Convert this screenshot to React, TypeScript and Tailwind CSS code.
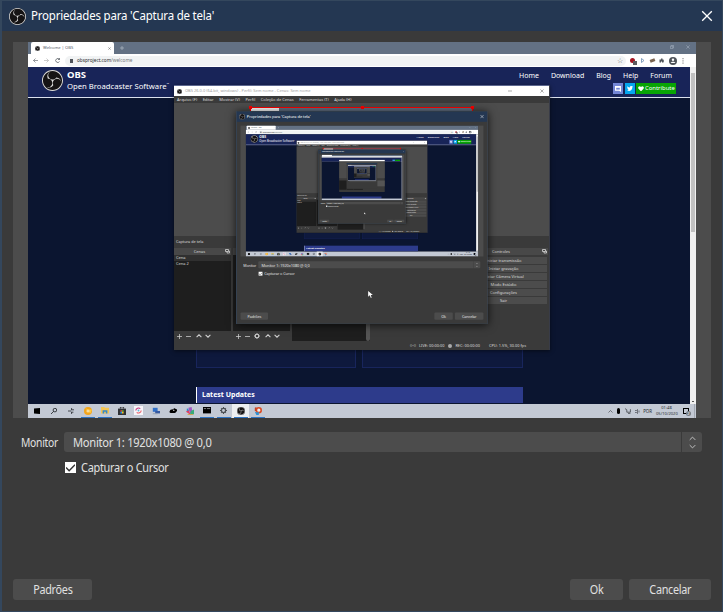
import React from 'react';
import { SiObsstudio } from 'react-icons/si';

const SCALE = 0.348;
const TEXT_DEPTH = 2;

function Logo({ className = '' }: { className?: string }) {
  return (
    <span className={`block shrink-0 rounded-full bg-[#151314] text-[#dcdcdc] ${className}`}>
      <SiObsstudio className="block size-full" />
    </span>
  );
}

type StrokeProps = { d: string; className?: string; w?: number };
function Stroke({ d, className = '', w = 1.5 }: StrokeProps) {
  return (
    <svg viewBox="0 0 10 10" className={`block shrink-0 ${className}`} fill="none" stroke="currentColor" strokeWidth={w}>
      <path d={d} />
    </svg>
  );
}

const X = 'M1 1L9 9M9 1L1 9';
const PLUS = 'M5 0V10M0 5H10';
const MINUS = 'M0 5H10';
const UP = 'M1 7L5 3L9 7';
const DOWN = 'M1 3L5 7L9 3';

function Browser() {
  return (
    <div className="flex h-[362px] flex-col bg-[#0b1530]">
      <div className="flex h-3 items-end bg-[#637184] pl-[3px]">
        <div className="flex h-[12px] w-[83px] items-center rounded-t-[2px] bg-white pl-1">
          <Logo className="size-[5px]" />
          <span className="ml-[3px] w-[66px] whitespace-nowrap text-[4.100px] text-[#555c68]">Welcome | OBS</span>
          <Stroke d={X} className="mr-[3px] size-[3px] text-[#555]" />
        </div>
        <Stroke d={PLUS} className="mb-[4px] ml-[6px] size-[4px] text-[#b8c2ce]" />
        <div className="mb-[5px] ml-auto mr-[6px] flex items-center gap-[12px] text-[#a3afbd]">
          <Stroke d="M1 3H7V9H1ZM3 3V1H9V7H7" className="size-[4px]" />
          <Stroke d={X} className="size-[4px]" />
        </div>
      </div>
      <div className="flex h-[13px] items-center bg-white px-[5px] text-[#555b62]">
        <Stroke d="M10 5H1M5 1L1 5L5 9" className="size-[5px]" w={1.200} />
        <Stroke d="M0 5H9M5 1L9 5L5 9" className="ml-[6px] size-[5px] text-[#aaa]" w={1.200} />
        <Stroke d="M9 3A4 4 0 1 0 9 7M9 0V3H6" className="ml-[6px] size-[5px]" />
        <div className="ml-[5px] flex h-[10px] w-[561px] items-center rounded-full bg-[#f1f3f4] pl-[5px] pr-[3px]">
          <span className="h-[4px] w-[3px] bg-[#50545a]" />
          <span className="ml-[4px] whitespace-nowrap text-[4.700px] text-[#73777c]"><span className="text-[#26292d]">obsproject.com</span>/welcome</span>
          <span className="ml-auto text-[7px] leading-none">☆</span>
        </div>
        <div className="ml-[4px] flex w-[54px] shrink-0 items-center justify-between">
          <span className="relative size-[5px] rounded-full bg-[#a31522]"><i className="absolute left-[3px] top-[3px] size-[4px] bg-[#5c5c60]" /></span>
          <Stroke d="M3 1V9L8 5Z" className="size-[5px] text-[#5d83aa]" />
          <span className="h-[3px] w-[5px] rotate-[-20deg] bg-[#796450]" />
          <svg viewBox="0 0 10 10" className="size-[5px] fill-[#50555b]"><path d="M1 3H4V1H7V3H9V5H10V7H9V9H6V7H4V9H1Z" /></svg>
          <svg viewBox="0 0 10 10" className="size-[8px]"><circle cx="5" cy="5" r="5" fill="#4e5359" /><circle cx="5" cy="3.500" r="1.500" fill="#fff" /><path d="M2 7.500C3 5.500 7 5.500 8 7.500Z" fill="#fff" /></svg>
          <svg viewBox="0 0 2 8" className="h-[6px] w-[2px] fill-[#555]"><path d="M.5 0h1v1.500h-1zM.5 3h1v1.500h-1zM.5 6h1v1.500h-1z" /></svg>
        </div>
      </div>
      <div className="flex min-h-0 flex-1">
        <div className="flex min-w-0 flex-1 flex-col">
          <div className="flex h-[31px] shrink-0 border-b border-[#dce1ee] bg-[#182458] pl-[14px] pt-[3px] text-white">
            <Logo className="size-[21px]" />
            <div className="ml-[4px] whitespace-nowrap">
              <div className="h-[11px] text-[9.500px] font-bold leading-[10px]">OBS</div>
              <div className="flex text-[7.700px] leading-[10px]">Open Broadcaster Software<span className="text-[3px] leading-[6px]">™</span></div>
            </div>
            <div className="ml-auto mr-[14px]">
              <div className="flex justify-end gap-[12px] pr-[4px] text-[7px] leading-[11px]">
                <span>Home</span><span>Download</span><span>Blog</span><span>Help</span><span>Forum</span>
              </div>
              <div className="mt-[2px] flex h-[11px] justify-end gap-[1.500px]">
                <span className="flex w-[10px] items-center justify-center bg-[#7386d5]"><svg viewBox="0 0 10 10" className="size-[6px]"><path d="M0 0H10V10L7 8H0Z" fill="#fff" /><path d="M2 3H8V6H2Z" fill="#7386d5" /></svg></span>
                <span className="flex w-[10px] items-center justify-center bg-[#05a6ee]"><svg viewBox="0 0 24 20" className="w-[6px] fill-white"><path d="M24 2.400 21.500 5C21.500 14 15 20 7.500 20 5 20 2 19 0 17.700c2.500.2 5-.5 7-2-2-.1-4-1.500-4.600-3.500h2.200C2 11.500.8 9.500.8 7.300l2.200.6C.7 6 .2 3.500 1.600 1c2.500 3 6 5 10.200 5.200C11 2 14 0 16.600 0c1.500 0 2.700.6 3.600 1.500L23 .5z" /></svg></span>
                <span className="flex w-[40px] items-center bg-[#08a404] pl-[2px] text-[5.900px]"><svg viewBox="0 0 10 9" className="mr-[1px] w-[6px] shrink-0 fill-white"><path d="M5 9L.8 4.700C-1 2 2-1.500 5 1.500 8-1.500 11 2 9.200 4.700Z" /></svg>Contribute</span>
              </div>
            </div>
          </div>
          <div className="ml-[168px] mt-auto flex w-[327px] flex-col">
            <div className="flex gap-[6px]">
              <div className="h-[80px] w-[160px] border border-[#18255c] bg-[#0e193d]" />
              <div className="h-[80px] w-[161px] border border-[#18255c] bg-[#0e193d]" />
            </div>
            <div className="mb-[1px] mt-[19px] flex h-[16px] items-center border-l border-white bg-[#2d3b8b] pl-[5px] text-[7px] font-bold text-white">Latest Updates</div>
          </div>
        </div>
        <div className="flex w-[6px] flex-col items-center bg-[#f1f1f1]">
          <span className="mt-[6px] h-[159px] w-[4px] bg-[#c1c1c1]" />
          <span className="mb-[2px] mt-auto h-px w-[2px] bg-[#555]" />
        </div>
      </div>
    </div>
  );
}

function Task({ children, on = false, active = false }: { children: React.ReactNode; on?: boolean; active?: boolean }) {
  return (
    <div className={`flex h-[14px] w-[17px] flex-col items-center text-[#15181c] ${active ? 'bg-[#eceef1]' : ''}`}>
      <div className="flex flex-1 items-center">{children}</div>
      <div className={`h-px w-[14px] ${on ? 'bg-[#2f75c4]' : ''}`} />
    </div>
  );
}

function Taskbar() {
  return (
    <div className="flex h-[14px] items-center bg-[#c3c9d4]">
      <Task><svg viewBox="0 0 10 10" className="size-[6px]"><path d="M0 1L10 0V10L0 9Z" /></svg></Task>
      <Task><svg viewBox="0 0 10 10" className="size-[6px]" fill="none" stroke="currentColor" strokeWidth="1.300"><circle cx="6.500" cy="3.500" r="3" /><path d="M4.500 5.500L0 10" /></svg></Task>
      <Task><Stroke d="M0 5H5M5 3H10M5 7H9M6 0V3M6 7V10" className="size-[6px]" w={1.200} /></Task>
      <Task on><svg viewBox="0 0 10 10" className="size-[8px]"><circle cx="5" cy="5" r="5" fill="#f3a51c" /><path d="M1 1L5 3H10L8 8" fill="#ffc93f" /><circle cx="5" cy="5" r="2" fill="#f5dca0" /></svg></Task>
      <Task on><svg viewBox="0 0 10 8" className="w-[8px]"><path d="M0 0H4L5 1H10V8H0Z" fill="#f4c453" /><path d="M2 8V4H8V8H6V6H4V8Z" fill="#3488c9" /></svg></Task>
      <Task><svg viewBox="0 0 10 10" className="size-[8px]"><path d="M3 2V0H7V2" fill="none" stroke="#222" /><path d="M0 2H10V10H0Z" fill="#303236" /><path d="M3 4h2v2H3z" fill="#e44" /><path d="M5 4h2v2H5z" fill="#5b3" /><path d="M3 6h2v2H3z" fill="#29e" /><path d="M5 6h2v2H5z" fill="#fb2" /></svg></Task>
      <Task><svg viewBox="0 0 10 10" className="size-[9px]"><path d="M0 0H10V10H0Z" fill="#f7f5f9" /><path d="M2 5A3 3 0 0 1 7 3" stroke="#c33a80" fill="none" strokeWidth="1.200" /><path d="M8 5A3 3 0 0 1 3 7" stroke="#e85b65" fill="none" strokeWidth="1.200" /><circle cx="5" cy="5" r="1" fill="#58b5db" /></svg></Task>
      <Task><svg viewBox="0 0 10 10" className="size-[8px]"><path d="M1 1H7V6H1Z" fill="#306fc7" /><path d="M4 5H10V8H4Z" fill="#3659a0" /><path d="M1 8H7V9H1Z" fill="#8a98a9" /></svg></Task>
      <Task><svg viewBox="0 0 10 7" className="w-[8px]"><ellipse cx="5" cy="4" rx="4" ry="2.500" /><path d="M6 0L10 2V4L6 5M0 5L4 3V7Z" /><circle cx="6" cy="3" r=".8" fill="#ddd" /></svg></Task>
      <Task><svg viewBox="0 0 10 10" className="size-[8px]"><path d="M0 6L3 3L6 10Z" fill="#df4060" /><path d="M3 1L7 0L8 6L5 8Z" fill="#a255c1" /><path d="M1 2H3V5H1Z" fill="#308acf" /><path d="M6 5L10 3V9H5Z" fill="#39ab79" /><path d="M2 9H9V10H2Z" fill="#d8a13c" /></svg></Task>
      <Task on><svg viewBox="0 0 10 8" className="w-[8px]"><path d="M0 0H10V8H0Z" /><path d="M1 2H4M5 2H9" stroke="#ccc" strokeWidth=".8" /></svg></Task>
      <Task on><Gear className="size-[7px] text-[#4b4f54]" /></Task>
      <Task on active><Logo className="size-[8px]" /></Task>
      <Task on><svg viewBox="0 0 10 10" className="size-[8px]"><circle cx="6" cy="4" r="3" stroke="#da4d26" strokeWidth="2" fill="#eee" /><path d="M1 1L3 0V5H1Z" fill="#c34124" /><path d="M1 6L4 7L6 6V10H3Z" fill="#2a91d6" /></svg></Task>
      <div className="ml-auto flex h-full items-center text-[#26292e]">
        <Stroke d={UP} className="size-[5px]" w={1.100} />
        <span className="ml-[4px] h-[6px] w-[3px] rounded-full bg-black" />
        <Stroke d="M0 1L3 3V7H9V2M5 9H9" className="ml-[5px] size-[6px]" w={1.100} />
        <Stroke d="M0 3H3L5 1V9L3 7H0M8 3V7" className="ml-[4px] size-[5px]" w={1.100} />
        <span className="ml-[3px] text-[4.400px]">POR</span>
        <div className="ml-[4px] w-[21px] whitespace-nowrap text-center text-[4.100px] leading-[6px]">01:48<br />05/10/2020</div>
        <span className="relative ml-[6px] size-[6px] border border-black"><i className="absolute left-[2px] top-[2px] size-[5px] rounded-full bg-[#747a80] text-center text-[4px] not-italic leading-[5px] text-white">2</i></span>
        <span className="ml-[5px] mr-px h-full w-px bg-[#a2a8b2]" />
      </div>
    </div>
  );
}

function Gear({ className = '' }: { className?: string }) {
  return (
    <svg viewBox="0 0 10 10" className={`block ${className}`} fill="none" stroke="currentColor">
      <circle cx="5" cy="5" r="3" strokeWidth="1.800" />
      <path d="M5 0V1.500M5 8.500V10M0 5H1.500M8.500 5H10M1.500 1.500L2.500 2.500M7.500 7.500L8.500 8.500M8.500 1.500L7.500 2.500M1.500 8.500L2.500 7.500" strokeWidth="1.500" />
    </svg>
  );
}

function DockTools({ gear = false }: { gear?: boolean }) {
  return (
    <div className="flex h-[10px] items-center bg-[#3a3a3a] pl-[3px] text-[#d0d0d0]">
      <Stroke d={PLUS} className="size-[5px]" />
      <Stroke d={MINUS} className="ml-[4px] size-[5px]" />
      {gear && <Gear className="ml-[4px] size-[6px]" />}
      <Stroke d={UP} className="ml-[5px] size-[6px]" w={1.800} />
      <Stroke d={DOWN} className="ml-[3px] size-[6px]" w={1.800} />
    </div>
  );
}

function DockTitle({ label }: { label: string }) {
  return (
    <div className="flex h-[7px] shrink-0 items-center bg-[#484848] pr-px text-[4px] leading-none text-[#ddd]">
      <span className="flex-1 text-center">{label}</span>
      <Stroke d="M1 1H7V5H1ZM4 5V8H9V4H7" className="size-[5px]" />
    </div>
  );
}

const controls = ['Iniciar transmissão', 'Iniciar gravação', 'Iniciar Câmera Virtual', 'Modo Estúdio', 'Configurações', 'Sair'];

function Studio() {
  return (
    <div className="flex h-[265px] w-[376px] flex-col overflow-hidden border-r border-[#383b47] bg-[#3a3a3a] text-[4px] text-[#ddd] shadow-[0_1px_4px_#0008]">
      <div className="flex h-[11px] shrink-0 items-center border-t border-[#5c6790] bg-white px-[3px] text-[#a0a0a0]">
        <Logo className="size-[5px]" />
        <span className="ml-[3px] whitespace-pre text-[4px]">OBS 26.0.0 (64-bit, windows) - Perfil: Sem nome - Cenas: Sem nome</span>
        <div className="ml-auto mr-[2px] flex gap-[12px] text-[#777]">
          <Stroke d={MINUS} className="size-[4px]" />
          <span className="size-[4px]" />
          <Stroke d={X} className="size-[4px]" />
        </div>
      </div>
      <div className="flex h-[7px] shrink-0 items-center gap-[5.500px] whitespace-nowrap pl-[3px] text-[4px] leading-none">
        <span>Arquivo (F)</span><span>Editar</span><span>Mostrar (V)</span><span>Perfil</span><span>Coleção de Cenas</span><span>Ferramentas (T)</span><span>Ajuda (H)</span>
      </div>
      <div className="h-[133px] shrink-0 bg-[#4c4c4c] pl-[76px] pt-[4px]">
        <div className="relative h-[129px] w-[223px] border border-[#f00] bg-[#637184]">
          <div className="h-[4px] w-[28px] bg-white" />
          <i className="absolute -left-[2px] -top-[2px] size-[3px] bg-[#f00]" />
          <i className="absolute -top-[2px] left-[110px] size-[3px] bg-[#f00]" />
          <i className="absolute -right-[2px] -top-[2px] size-[3px] bg-[#f00]" />
        </div>
      </div>
      <div className="flex h-[12px] shrink-0 items-center pl-[2px] text-[3.800px]">Captura de tela</div>
      <div className="flex h-[93px] shrink-0 gap-[2px]">
        <div className="flex w-[57px] flex-col">
          <DockTitle label="Cenas" />
          <div className="flex-1 bg-[#1e1e1e] leading-[6px]">
            <div className="bg-[#303030] pl-[2px]">Cena</div>
            <div className="pl-[2px]">Cena 2</div>
          </div>
          <DockTools />
        </div>
        <div className="flex w-[57px] flex-col">
          <DockTitle label="Fontes" />
          <div className="flex-1 bg-[#1e1e1e]" />
          <DockTools gear />
        </div>
        <div className="flex w-[78px] flex-col">
          <DockTitle label="Mixer de áudio" />
          <div className="flex flex-1 justify-end bg-[#1e1e1e]"><span className="w-[4px] rounded-full bg-[#555]" /></div>
        </div>
        <div className="w-[86px]" />
        <div className="flex w-[88px] flex-col">
          <DockTitle label="Controles" />
          <div className="mt-[2px] flex flex-col gap-px pr-px">
            {controls.map((c) => <div key={c} className="h-[7px] whitespace-nowrap bg-[#4c4c4c] text-center text-[4px] leading-[7px]">{c}</div>)}
          </div>
        </div>
      </div>
      <div className="flex h-[9px] items-center justify-end whitespace-nowrap pr-[23px] text-[3.900px]">
        <span className="mr-[3px] text-[#aaa]">((•))</span>LIVE: 00:00:00
        <span className="ml-[4px] mr-[3px] size-[4px] rounded-full bg-[#aaa]" />REC: 00:00:00
        <span className="ml-[9px]">CPU: 1.5%, 30.00 fps</span>
      </div>
    </div>
  );
}

/* Wordless desktop for the levels where lettering is smaller than a pixel. */
function TinyDesktop({ depth }: { depth: number }) {
  return (
    <div className="relative h-[376px] w-[668px] overflow-hidden">
      <div className="flex h-full flex-col bg-[#0b1530]">
        <div className="h-[12px] bg-[#637184]"><div className="ml-[3px] h-full w-[83px] bg-white" /></div>
        <div className="h-[13px] bg-white" />
        <div className="flex h-[31px] items-end justify-end gap-[2px] border-b border-white bg-[#182458] pb-[3px] pr-[20px]">
          <span className="h-[11px] w-[20px] bg-[#3d99e2]" /><span className="h-[11px] w-[40px] bg-[#08a404]" />
        </div>
        <div className="ml-[168px] mt-auto h-[17px] w-[327px] bg-[#2d3b8b]" />
        <div className="h-[14px] bg-[#c3c9d4]" />
      </div>
      <div className="absolute right-0 top-[25px] h-[337px] w-[6px] bg-[#f1f1f1]" />
      <div className="absolute left-[146px] top-[43px] flex h-[265px] w-[376px] flex-col bg-[#3a3a3a]">
        <div className="h-[11px] bg-white" />
        <div className="mt-[7px] h-[133px] bg-[#4c4c4c]" />
        <div className="mt-[19px] flex h-[76px] gap-[2px]">
          <span className="w-[57px] bg-[#1e1e1e]" /><span className="w-[57px] bg-[#1e1e1e]" /><span className="w-[78px] bg-[#1e1e1e]" />
          <span className="ml-auto h-[48px] w-[62px] bg-[#555]" />
        </div>
      </div>
      {depth < 5 && (
        <div className="absolute left-[208px] top-[69px] flex h-[612px] w-[723px] origin-top-left flex-col bg-[#3a3a3a]" style={{ transform: `scale(${SCALE})` }}>
          <div className="h-[31px] bg-[#243752]" />
          <div className="ml-[13px] mt-[11px] flex h-[376px] w-[698px] justify-center bg-[#4c4c4c]"><TinyDesktop depth={depth + 1} /></div>
          <div className="ml-[64px] mt-[14px] h-[20px] w-[638px] bg-[#4c4c4c]" />
        </div>
      )}
    </div>
  );
}

function Desktop({ depth }: { depth: number }) {
  return (
    <div className="relative h-[376px] w-[668px] overflow-hidden">
      <Browser />
      <Taskbar />
      <div className="absolute left-[146px] top-[43px]"><Studio /></div>
      <div className="absolute left-[208px] top-[69px] h-[612px] w-[723px] origin-top-left shadow-[0_4px_24px_#000b]" style={{ transform: `scale(${SCALE})` }}>
        <Dialog depth={depth + 1} />
      </div>
      <svg viewBox="0 0 12 18" className="absolute left-[340px] top-[249px] h-[7px] w-[5px]"><path d="M0 0V15L4 11L7 18L9 17L6.500 10.500H12Z" fill="#fff" /></svg>
    </div>
  );
}

function Dialog({ depth }: { depth: number }) {
  const words = depth <= TEXT_DEPTH;
  return (
    <div className="flex h-[612px] w-[723px] flex-col overflow-hidden border-b border-l-2 border-r border-t border-[#34475d] bg-[#3a3a3a] text-[12px] text-[#e1e1e1]">
      <div className="flex h-[30px] shrink-0 items-center bg-[#243752] pl-[7px] pr-[9px] text-white">
        <Logo className="size-[17px]" />
        <span className="ml-[5px] origin-left scale-x-[0.955] whitespace-nowrap text-[12px] tracking-[-0.200px]">{words && "Propriedades para 'Captura de tela'"}</span>
        <Stroke d={X} className="ml-auto size-[12px]" w={1.100} />
      </div>
      <div className="ml-[11px] mt-[11px] flex h-[376px] w-[698px] shrink-0 justify-center bg-[#4c4c4c]">
        {depth < TEXT_DEPTH ? <Desktop depth={depth} /> : <TinyDesktop depth={depth} />}
      </div>
      <div className="mt-[14px] flex h-[20px] shrink-0 items-center pl-[19px]">
        <span className="w-[43px] origin-left scale-x-[0.860] pt-[2px] tracking-[-0.300px]">{words && 'Monitor'}</span>
        <div className="flex h-[20px] w-[617px] items-center rounded-l-[3px] bg-[#4c4c4c] pl-[9px] pt-[2px] tracking-[-0.300px]"><span className="origin-left scale-x-[0.930]">{words && 'Monitor 1: 1920x1080 @ 0,0'}</span></div>
        <div className="ml-px flex h-[20px] w-[20px] flex-col items-center justify-center gap-px rounded-r-[3px] bg-[#4c4c4c] text-[#c4c4c4]">
          <Stroke d={UP} className="size-[7px]" w={1.400} />
          <Stroke d={DOWN} className="size-[7px]" w={1.400} />
        </div>
      </div>
      <div className="mt-[9px] flex h-[12px] shrink-0 items-center pl-[63px]">
        <span className="flex size-[11px] items-center justify-center bg-white"><Stroke d="M0 5L3.500 8.500L10 2" className="size-[9px] text-[#333]" w={1.600} /></span>
        <span className="ml-[5px] origin-left scale-x-[0.910] pt-px tracking-[-0.300px]">{words && 'Capturar o Cursor'}</span>
      </div>
      <div className="mb-[11px] mt-auto flex h-[21px] shrink-0 pl-[11px] pr-[11px] pt-0 tracking-[-0.300px]">
        <div className="flex w-[79px] items-center justify-center rounded-[3px] bg-[#4c4c4c] pt-px"><span className="scale-x-[0.900]">{words && 'Padrões'}</span></div>
        <div className="ml-auto flex w-[53px] items-center justify-center rounded-[3px] bg-[#4c4c4c] pt-px"><span className="scale-x-[0.900]">{words && 'Ok'}</span></div>
        <div className="ml-[6px] flex w-[82px] items-center justify-center rounded-[3px] bg-[#4c4c4c] pt-px"><span className="scale-x-[0.900]">{words && 'Cancelar'}</span></div>
      </div>
    </div>
  );
}

export default function App() {
  return (
    <main className="h-[612px] w-[723px] overflow-hidden font-['Noto_Sans','Open_Sans',sans-serif]">
      <Dialog depth={0} />
    </main>
  );
}
